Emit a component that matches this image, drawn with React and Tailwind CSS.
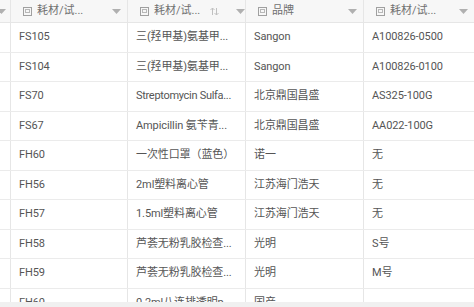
import React from "react";

const rows = [
  ["FS105", "三(羟甲基)氨基甲...", "Sangon", "A100826-0500"],
  ["FS104", "三(羟甲基)氨基甲...", "Sangon", "A100826-0100"],
  ["FS70", "Streptomycin Sulfa...", "北京鼎国昌盛", "AS325-100G"],
  ["FS67", "Ampicillin 氨苄青...", "北京鼎国昌盛", "AA022-100G"],
  ["FH60", "一次性口罩（蓝色）", "诺一", "无"],
  ["FH56", "2ml塑料离心管", "江苏海门浩天", "无"],
  ["FH57", "1.5ml塑料离心管", "江苏海门浩天", "无"],
  ["FH58", "芦荟无粉乳胶检查...", "光明", "S号"],
  ["FH59", "芦荟无粉乳胶检查...", "光明", "M号"],
  ["FH60", "0.2ml八连排透明p...", "国产", ""],
];

const heights = ["h-[30px]", "h-[29px]"];

function Caret() {
  return (
    <svg width="9" height="5" viewBox="0 0 9 5" className="shrink-0">
      <path d="M0 0 L9 0 L4.5 5 Z" fill="#b0b0b0" />
    </svg>
  );
}

function FieldIcon() {
  return (
    <svg width="9" height="9" viewBox="0 0 9 9" className="shrink-0">
      <rect x="0.5" y="0.5" width="8" height="8" fill="none" stroke="#a0a0a0" strokeWidth="1" />
      <rect x="2.5" y="2.5" width="4" height="3" fill="none" stroke="#b8b8b8" strokeWidth="1" />
    </svg>
  );
}

function SortIcon() {
  return (
    <svg width="9" height="9" viewBox="0 0 9 9" className="shrink-0">
      <path d="M2.5 8 V1 M0.5 3 L2.5 1 L4.5 3" stroke="#c0c0c0" strokeWidth="1" fill="none" />
      <path d="M6.5 1 V8 M4.5 6 L6.5 8 L8.5 6" stroke="#c0c0c0" strokeWidth="1" fill="none" />
    </svg>
  );
}

const widths = ["w-[11px]", "w-[117px]", "w-[118px]", "w-[118px]", "flex-1"];

export default function App() {
  const font = { fontFamily: 'Roboto, "Noto Sans CJK SC", sans-serif' };
  return (
    <div className="w-[474px] h-[307px] flex flex-col overflow-hidden bg-white text-[11px]" style={font}>
      <div className="flex-1 overflow-hidden">
        <div className="flex h-[23px] bg-[#f7f7f7] border-b border-[#e6e6e6] text-[#707070]">
          <div className="w-[11px] shrink-0 border-r border-[#e6e6e6] flex items-center justify-end pr-[4px] overflow-hidden">
            <Caret />
          </div>
          {["耗材/试...", "耗材/试...", "品牌", "耗材/试..."].map((t, i) => (
            <div
              key={i}
              className={`${widths[i + 1]} ${i < 3 ? "shrink-0 border-r border-[#e6e6e6]" : ""} flex items-center pl-[12px] pr-[6px] gap-[5px] overflow-hidden`}
            >
              <FieldIcon />
              <span className="whitespace-nowrap">{t}</span>
              <span className="flex-1" />
              {i === 1 && <span className="mr-[12px] flex"><SortIcon /></span>}
              <Caret />
            </div>
          ))}
        </div>
        {rows.map((r, ri) => (
          <div key={ri} className={`flex ${heights[ri % 2]} border-b border-[#ebebeb] text-[#555]`}>
            <div className="w-[11px] shrink-0 border-r border-[#e6e6e6]" />
            {r.map((c, ci) => (
              <div
                key={ci}
                className={`${widths[ci + 1]} ${ci < 3 ? "shrink-0 border-r border-[#e6e6e6]" : ""} flex items-center pl-[8px] overflow-hidden`}
              >
                <span
                  className={`whitespace-nowrap ${
                    c.startsWith("Streptomycin") ? "tracking-[-0.3px]" : "tracking-[-0.1px]"
                  }`}
                >
                  {c}
                </span>
              </div>
            ))}
          </div>
        ))}
      </div>
      <div className="h-[5px] bg-[#f0f0f0] shrink-0" />
    </div>
  );
}
